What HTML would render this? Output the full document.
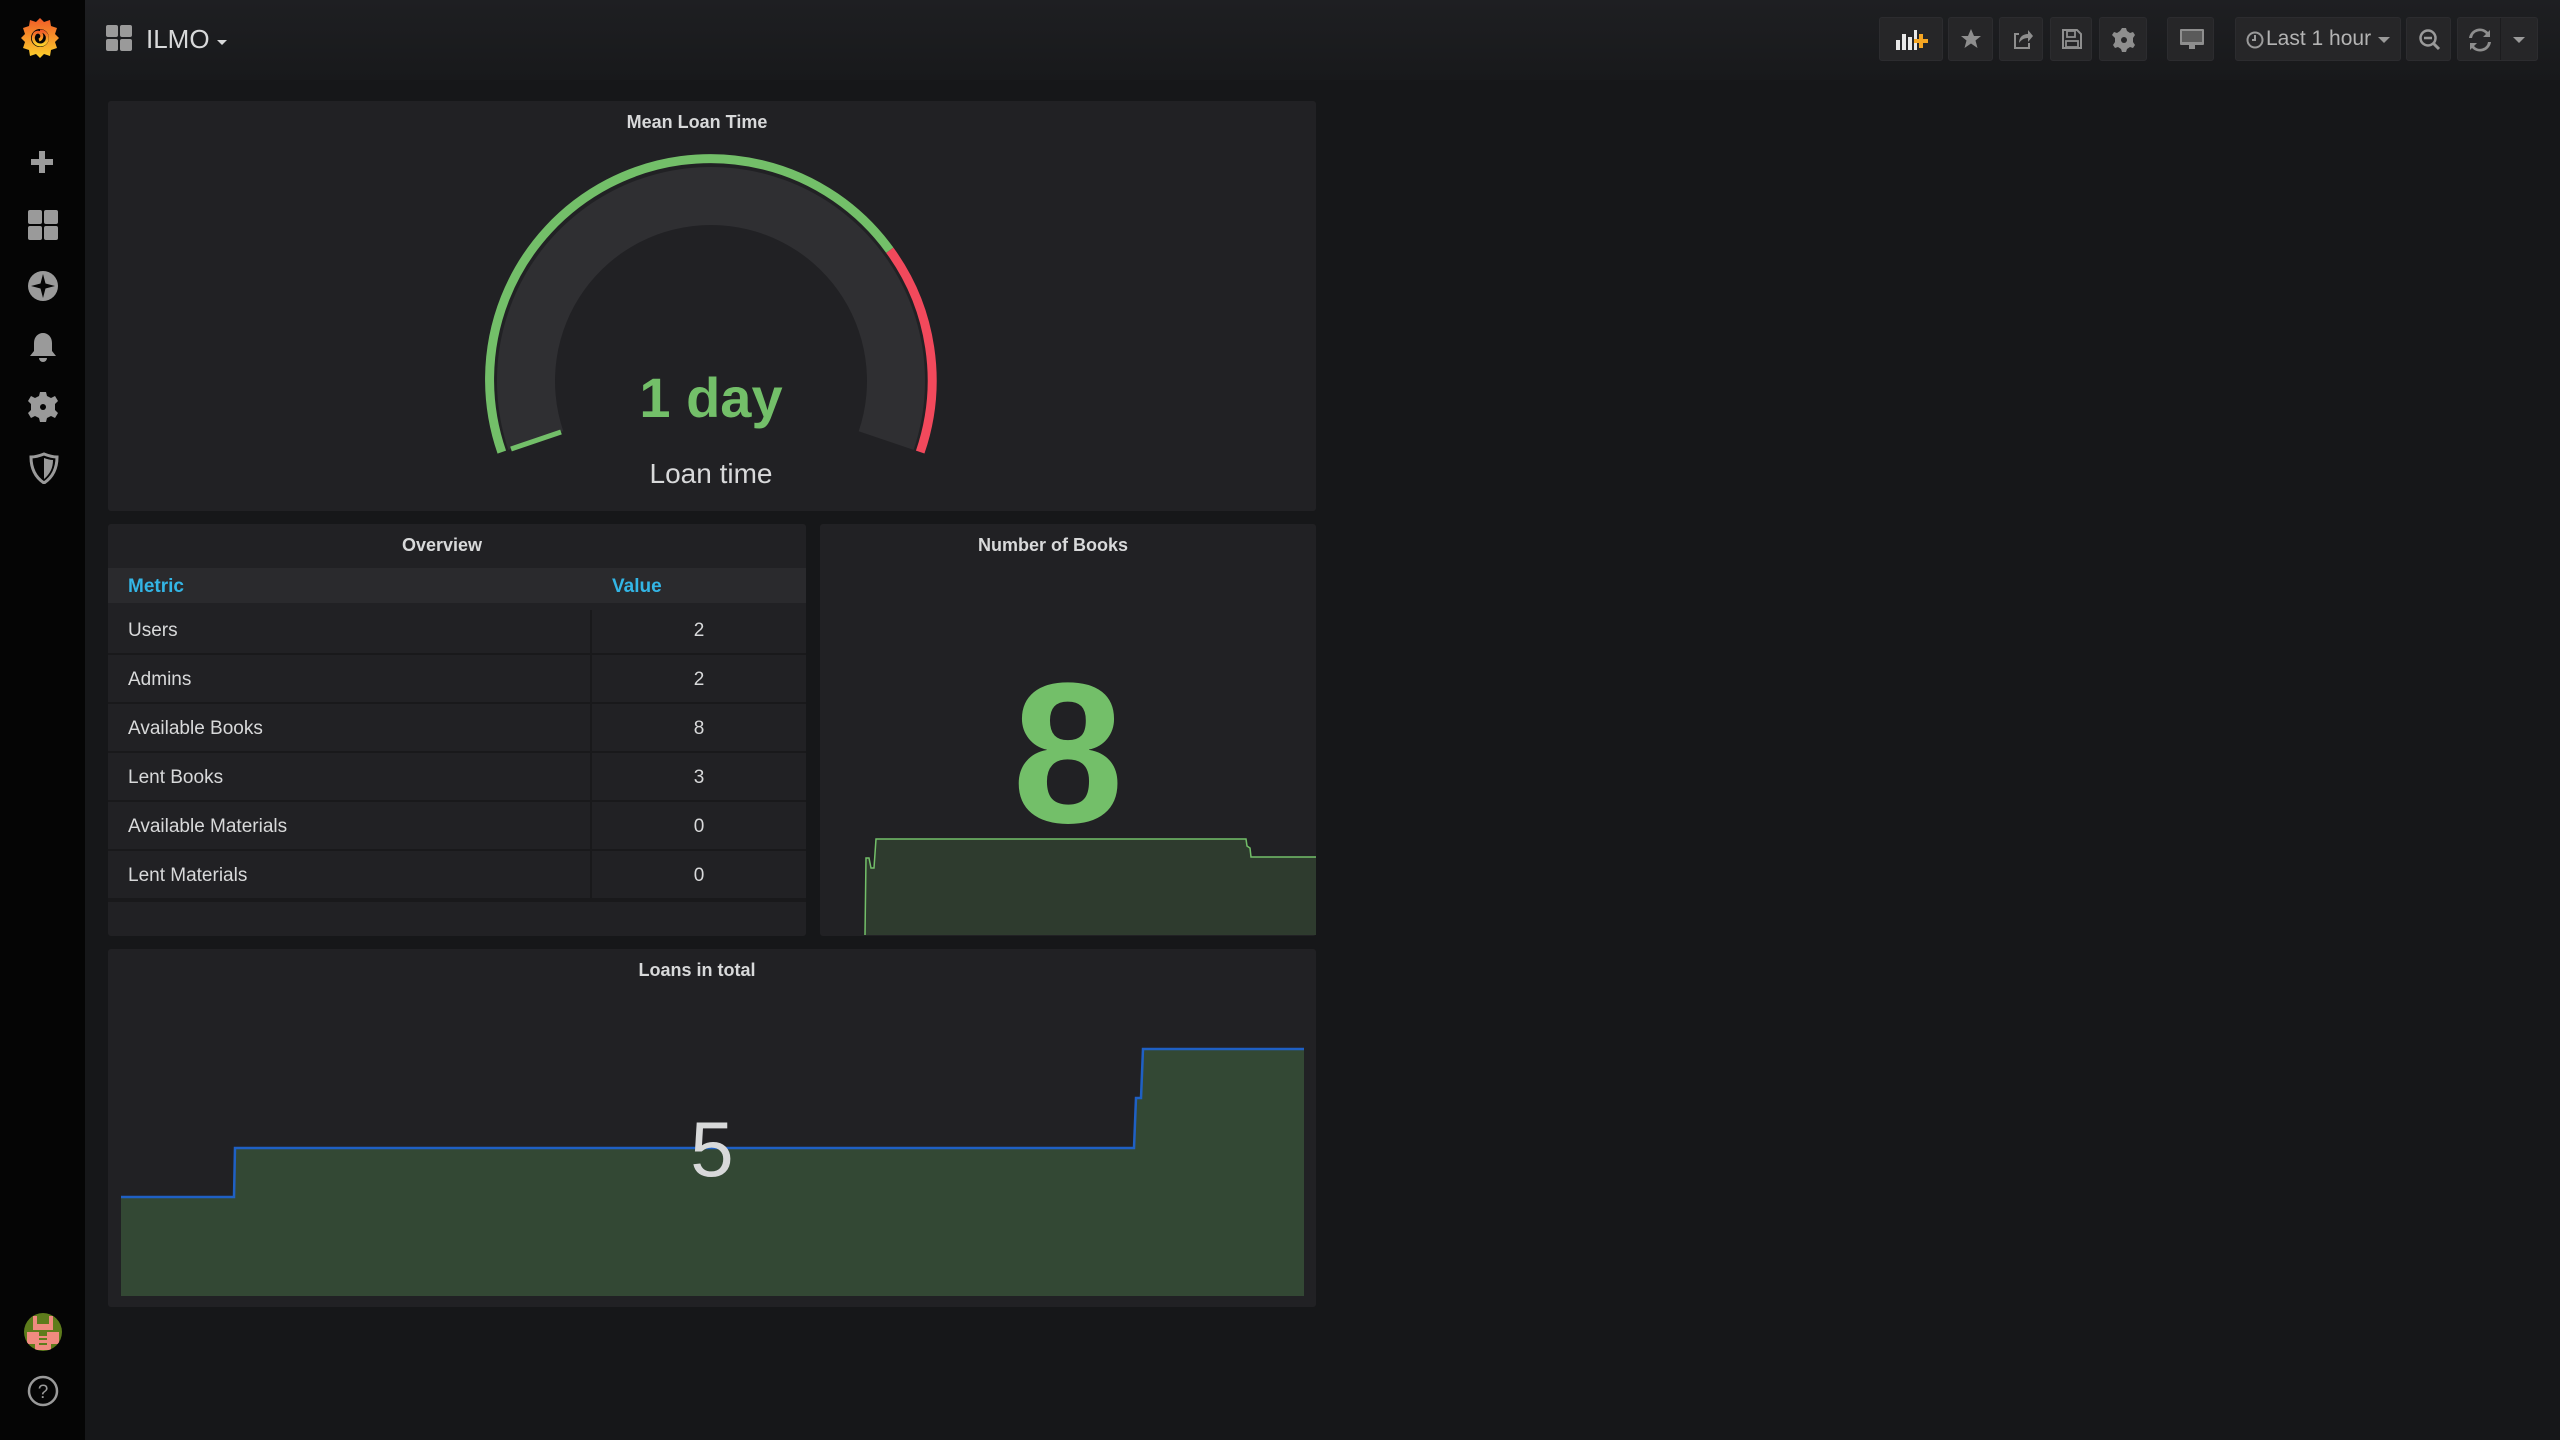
<!DOCTYPE html>
<html><head><meta charset="utf-8"><style>
*{margin:0;padding:0;box-sizing:border-box}
body{width:2560px;height:1440px;background:#161719;font-family:"Liberation Sans",sans-serif;color:#d8d9da;position:relative;overflow:hidden}
.side{position:absolute;left:0;top:0;width:85px;height:1440px;background:#050505}
.top{position:absolute;left:85px;top:0;right:0;height:80px;background:linear-gradient(#1e1f22,#18191b)}
.abs{position:absolute}
.panel{position:absolute;background:#212124;border-radius:3px}
.ptitle{position:absolute;left:0;right:30px;text-align:center;font-size:18px;font-weight:bold;color:#d8d9da}
.btn{position:absolute;top:17px;height:44px;background:#262628;border:1px solid #2c2c2f;border-radius:3px}
.row{position:absolute;left:0;right:0;height:47px;background:#212124;font-size:19px}
</style></head><body>
<div class="side"></div>
<div class="top"></div>
<svg class="abs" style="left:18px;top:14px" width="44" height="48" viewBox="0 0 44 48">
<defs><linearGradient id="lg" x1="0" y1="1" x2="0" y2="0"><stop offset="0" stop-color="#fcd22b"/><stop offset="1" stop-color="#f05a28"/></linearGradient></defs>
<path d="M22 4l4 4 6-2 1 6 6 2-2 6 4 4-4 4 2 6-6 2-1 6-6-2-4 4-4-4-6 2-1-6-6-2 2-6-4-4 4-4-2-6 6-2 1-6 6 2z" fill="url(#lg)"/>
<circle cx="22" cy="24" r="9" fill="#050505"/>
<path d="M22 17a7 7 0 1 1-6 4a4 4 0 1 1 5 5" fill="none" stroke="url(#lg)" stroke-width="3"/>
</svg>
<svg class="abs" style="left:30px;top:150px" width="24" height="24"><path d="M9 1h6v8h8v6h-8v8H9v-8H1V9h8z" fill="#9a9a9a"/></svg>
<svg class="abs" style="left:28px;top:210px" width="30" height="30"><rect x="0" y="0" width="14" height="14" rx="2" fill="#9a9a9a"/><rect x="16" y="0" width="14" height="14" rx="2" fill="#9a9a9a"/><rect x="0" y="16" width="14" height="14" rx="2" fill="#9a9a9a"/><rect x="16" y="16" width="14" height="14" rx="2" fill="#9a9a9a"/></svg>
<svg class="abs" style="left:28px;top:271px" width="30" height="30"><circle cx="15" cy="15" r="15" fill="#9a9a9a"/><path d="M15 3l2.5 9.5L27 15l-9.5 2.5L15 27l-2.5-9.5L3 15l9.5-2.5z" fill="#050505"/></svg>
<svg class="abs" style="left:30px;top:332px" width="26" height="32"><path d="M13 1c-5 0-9 4-9 10v8l-4 5h26l-4-5v-8c0-6-4-10-9-10z" fill="#9a9a9a"/><path d="M9 26a4 4 0 0 0 8 0z" fill="#9a9a9a"/></svg>
<svg class="abs" style="left:28px;top:392px" width="30" height="30"><path d="M12 0h6l1 4 4 2 4-2 3 5-3 3v6l3 3-3 5-4-2-4 2-1 4h-6l-1-4-4-2-4 2-3-5 3-3v-6L0 9l3-5 4 2 4-2z" fill="#9a9a9a"/><circle cx="15" cy="15" r="3" fill="#050505"/></svg>
<svg class="abs" style="left:29px;top:452px" width="30" height="32"><path d="M15 2C10 4 5 5 2 5c0 11 4 20 13 26 9-6 13-15 13-26-3 0-8-1-13-3z" fill="none" stroke="#9a9a9a" stroke-width="3"/><path d="M15 6v21c6-5 9-11 9-19-3 0-6-1-9-2z" fill="#9a9a9a"/></svg>
<svg class="abs" style="left:23px;top:1312px" width="40" height="40" viewBox="0 0 40 40"><clipPath id="cc"><circle cx="20" cy="20" r="19"/></clipPath><g clip-path="url(#cc)"><rect width="40" height="40" fill="#5e7c1c"/><path d="M10 4h4v8h12V4h4v14H10z M4 20h12v4h8v-4h12v12H28v6H12v-6H4z" fill="#f08b80"/><rect x="16" y="26" width="8" height="2" fill="#5e7c1c"/><rect x="16" y="31" width="8" height="2" fill="#5e7c1c"/></g></svg>
<svg class="abs" style="left:27px;top:1375px" width="32" height="32"><circle cx="16" cy="16" r="14" fill="none" stroke="#9a9a9a" stroke-width="2.5"/><text x="16" y="23" text-anchor="middle" font-size="19" fill="#9a9a9a" font-family="Liberation Sans">?</text></svg>
<svg class="abs" style="left:106px;top:25px" width="26" height="26"><rect x="0" y="0" width="12" height="12" rx="2" fill="#9a9a9a"/><rect x="14" y="0" width="12" height="12" rx="2" fill="#9a9a9a"/><rect x="0" y="14" width="12" height="12" rx="2" fill="#9a9a9a"/><rect x="14" y="14" width="12" height="12" rx="2" fill="#9a9a9a"/></svg>
<div class="abs" style="left:146px;top:24px;font-size:26px;color:#d8d9da">ILMO</div>
<div class="abs" style="left:217px;top:40px;border-left:5px solid transparent;border-right:5px solid transparent;border-top:5px solid #d8d9da"></div>
<div class="btn" style="left:1879px;width:64px"><svg style="position:absolute;left:14px;top:10px" width="36" height="24"><rect x="2" y="12" width="4" height="10" fill="#e8e8e8"/><rect x="8" y="6" width="4" height="16" fill="#e8e8e8"/><rect x="14" y="9" width="4" height="13" fill="#e8e8e8"/><rect x="20" y="2" width="3" height="20" fill="#e8e8e8"/><path d="M25 6h4v5h5v4h-5v5h-4v-5h-5v-4h5z" fill="#f5a623"/></svg></div>
<div class="btn" style="left:1948px;width:45px"><svg style="position:absolute;left:11px;top:10px" width="22" height="22"><path d="M11 1l3 7h7l-5.5 4.5 2 7.5L11 15.5 4.5 20l2-7.5L1 8h7z" fill="#8e8e8e"/></svg></div>
<div class="btn" style="left:1999px;width:44px"><svg style="position:absolute;left:11px;top:10px" width="22" height="22"><path d="M3 5h5v2H5v12h12v-4h2v6H3z" fill="#8e8e8e"/><path d="M8 15c0-6 4-9 9-9V2l5 6-5 6v-4c-4 0-7 2-9 5z" fill="#8e8e8e"/></svg></div>
<div class="btn" style="left:2050px;width:42px"><svg style="position:absolute;left:11px;top:11px" width="20" height="20"><path d="M1 1h14l4 4v14H1z" fill="none" stroke="#8e8e8e" stroke-width="2"/><rect x="5" y="2" width="8" height="6" fill="none" stroke="#8e8e8e" stroke-width="1.8"/><rect x="4" y="12" width="12" height="6" fill="none" stroke="#8e8e8e" stroke-width="1.8"/></svg></div>
<div class="btn" style="left:2099px;width:48px"><svg style="position:absolute;left:12px;top:10px" width="24" height="24"><path d="M10 0h4l1 3 3 2 3-1 2 3-2 3v4l2 3-2 3-3-1-3 2-1 3h-4l-1-3-3-2-3 1-2-3 2-3v-4L0 7l2-3 3 1 3-2z" fill="#8e8e8e"/><circle cx="12" cy="12" r="3" fill="#262628"/></svg></div>
<div class="btn" style="left:2167px;width:47px"><svg style="position:absolute;left:11px;top:10px" width="26" height="24"><rect x="1" y="1" width="24" height="16" rx="1" fill="#8e8e8e"/><rect x="3" y="3" width="20" height="11" fill="#5a5a5a"/><rect x="10" y="17" width="6" height="4" fill="#8e8e8e"/></svg></div>
<div class="btn" style="left:2235px;width:166px"><svg style="position:absolute;left:10px;top:13px" width="18" height="18"><circle cx="9" cy="9" r="7.5" fill="none" stroke="#9a9a9a" stroke-width="2"/><path d="M9 4v5h-3" fill="none" stroke="#9a9a9a" stroke-width="2"/></svg><span style="position:absolute;left:30px;top:9px;font-size:21px;color:#b4b4b4">Last 1 hour</span><div style="position:absolute;left:142px;top:19px;border-left:6px solid transparent;border-right:6px solid transparent;border-top:6px solid #9a9a9a"></div></div>
<div class="btn" style="left:2406px;width:45px"><svg style="position:absolute;left:11px;top:10px" width="24" height="24"><circle cx="10" cy="10" r="7.5" fill="none" stroke="#9a9a9a" stroke-width="2.5"/><path d="M6 10h8" stroke="#9a9a9a" stroke-width="2.5"/><path d="M15 15l6 6" stroke="#9a9a9a" stroke-width="3"/></svg></div>
<div class="btn" style="left:2457px;width:81px"><svg style="position:absolute;left:10px;top:10px" width="24" height="24"><path d="M4 10a8 8 0 0 1 14-4l-3 3h7V2l-2 2A11 11 0 0 0 1 10z M20 14a8 8 0 0 1-14 4l3-3H2v7l2-2a11 11 0 0 0 19-6z" fill="#8e8e8e"/></svg><div style="position:absolute;left:42px;top:0;bottom:0;width:1px;background:#1c1c1e"></div><div style="position:absolute;left:55px;top:19px;border-left:6px solid transparent;border-right:6px solid transparent;border-top:6px solid #9a9a9a"></div></div>

<div class="panel" style="left:108px;top:101px;width:1208px;height:410px">
<div class="ptitle" style="top:11px">Mean Loan Time</div>
</div>
<svg class="abs" style="left:108px;top:101px" width="1208" height="410">
<g transform="translate(603,280)">
<path d="M-202.6,68.9 A214,214 0 1 1 202.6,68.9 L147.7,50.2 A156,156 0 1 0 -147.7,50.2 Z" fill="#2f2f32"/>
<path d="M-209.2,71.1 A221,221 0 0 1 178.8,-130.7" fill="none" stroke="#73bf69" stroke-width="9"/>
<path d="M178.8,-130.7 A221,221 0 0 1 209.2,71.1" fill="none" stroke="#f2495c" stroke-width="9"/>
<path d="M-200,68 L-150,51" stroke="#73bf69" stroke-width="5"/>
</g>
<text x="603" y="316" text-anchor="middle" font-size="56" font-weight="bold" fill="#73bf69" font-family="Liberation Sans">1 day</text>
<text x="603" y="382" text-anchor="middle" font-size="28" fill="#d8d9da" font-family="Liberation Sans">Loan time</text>
</svg>

<div class="panel" style="left:108px;top:524px;width:698px;height:412px;background:#212124">
<div class="ptitle" style="top:11px">Overview</div>
<div style="position:absolute;left:0;right:0;top:44px;height:35px;background:#2a2a2d;font-size:19px;font-weight:bold;color:#33b5e5">
<span style="position:absolute;left:20px;top:8px">Metric</span><span style="position:absolute;left:504px;top:8px">Value</span></div>
<div style="position:absolute;left:0;right:0;top:82px;height:296px;background:#19191b"></div>
<div class="row" style="top:82px"><span style="position:absolute;left:20px;top:14px">Users</span></div>
<div class="row" style="top:131px"><span style="position:absolute;left:20px;top:14px">Admins</span></div>
<div class="row" style="top:180px"><span style="position:absolute;left:20px;top:14px">Available Books</span></div>
<div class="row" style="top:229px"><span style="position:absolute;left:20px;top:14px">Lent Books</span></div>
<div class="row" style="top:278px"><span style="position:absolute;left:20px;top:14px">Available Materials</span></div>
<div class="row" style="top:327px"><span style="position:absolute;left:20px;top:14px">Lent Materials</span></div>
<div style="position:absolute;left:482px;top:86px;width:2px;height:292px;background:#19191b"></div>
<div style="position:absolute;left:484px;width:214px;top:82px;font-size:19px;text-align:center">
<div style="position:absolute;left:0;right:0;top:14px">2</div>
<div style="position:absolute;left:0;right:0;top:63px">2</div>
<div style="position:absolute;left:0;right:0;top:112px">8</div>
<div style="position:absolute;left:0;right:0;top:161px">3</div>
<div style="position:absolute;left:0;right:0;top:210px">0</div>
<div style="position:absolute;left:0;right:0;top:259px">0</div>
</div>
</div>

<div class="panel" style="left:820px;top:524px;width:496px;height:412px">
<div class="ptitle" style="top:11px">Number of Books</div>
</div>
<svg class="abs" style="left:820px;top:524px" width="496" height="412">
<path d="M45,411 L46,334 L49,334 L51,344 L54,344 L56,315 L426,315 L427,322 L430,324 L431,333 L496,333 L496,411 Z" fill="#2e3b2e"/>
<path d="M45,411 L46,334 L49,334 L51,344 L54,344 L56,315 L426,315 L427,322 L430,324 L431,333 L496,333" fill="none" stroke="#73bf69" stroke-width="1.5"/>
<text x="248" y="298" text-anchor="middle" font-size="200" font-weight="bold" fill="#73bf69" font-family="Liberation Sans">8</text>
</svg>

<div class="panel" style="left:108px;top:949px;width:1208px;height:358px">
<div class="ptitle" style="top:11px">Loans in total</div>
</div>
<svg class="abs" style="left:108px;top:949px" width="1208" height="358">
<path d="M13,347 L13,248 L126,248 L127,199 L1026,199 L1028,149 L1033,149 L1035,100 L1196,100 L1196,347 Z" fill="#334834"/>
<path d="M13,248 L126,248 L127,199 L1026,199 L1028,149 L1033,149 L1035,100 L1196,100" fill="none" stroke="#1f60c4" stroke-width="2.5"/>
<text x="604" y="227" text-anchor="middle" font-size="78" fill="#d8d9da" font-family="Liberation Sans">5</text>
</svg>
</body></html>
